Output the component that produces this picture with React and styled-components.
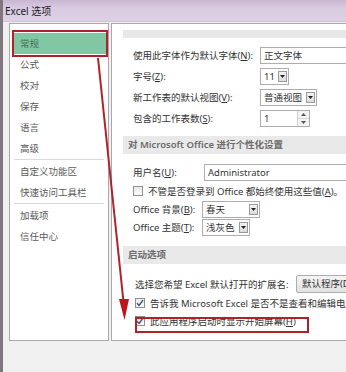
import styled, { createGlobalStyle } from "styled-components";

const GlobalStyle = createGlobalStyle`
  html, body {
    margin: 0;
    padding: 0;
    background: #f0f0f0;
  }
  body {
    font-family: "Noto Sans", "Noto Sans CJK SC", sans-serif;
  }
`;

const navGroups = [
  ["常规", "公式", "校对", "保存", "语言", "高级"],
  ["自定义功能区", "快速访问工具栏"],
  ["加载项", "信任中心"],
];

const Check = ({ checked }) => (
  <CheckBox>
    {checked && (
      <svg width="8" height="8" viewBox="0 0 8 8">
        <path d="M1 4.2 L3.1 6.4 L7 1.2" fill="none" stroke="#34507f" strokeWidth="1.4" />
      </svg>
    )}
  </CheckBox>
);

const Select = ({ value, width }) => (
  <SelectBox $width={width}>
    <SelectText>{value}</SelectText>
    <DropButton>
      <svg width="5" height="3" viewBox="0 0 5 3">
        <path d="M0 0 H5 L2.5 3 Z" fill="#222" />
      </svg>
    </DropButton>
  </SelectBox>
);

const App = () => {
  return (
    <>
      <GlobalStyle />
      <Window>
        <TitleBar>Excel 选项</TitleBar>
        <Body>
          <NavPanel>
            {navGroups.map((group, gi) => (
              <div key={gi}>
                {gi > 0 && <NavSeparator />}
                {group.map(item => (
                  <NavItem key={item} $active={item === "常规"}>
                    {item}
                  </NavItem>
                ))}
              </div>
            ))}
          </NavPanel>

          <ContentPanel>
            <ScrolledBand />

            <Group $top={7}>
              <FieldRow $label={127}>
                <Label>
                  使用此字体作为默认字体(<u>N</u>):
                </Label>
                <TextField>正文字体</TextField>
              </FieldRow>
              <FieldRow $label={127}>
                <Label>
                  字号(<u>Z</u>):
                </Label>
                <Select value="11" width={29} />
              </FieldRow>
              <FieldRow $label={127}>
                <Label>
                  新工作表的默认视图(<u>V</u>):
                </Label>
                <Select value="普通视图" width={57} />
              </FieldRow>
              <FieldRow $label={127}>
                <Label>
                  包含的工作表数(<u>S</u>):
                </Label>
                <SpinBox>
                  <SelectText>1</SelectText>
                  <SpinButtons>
                    <SpinArrow>
                      <svg width="5" height="3" viewBox="0 0 5 3">
                        <path d="M0 3 H5 L2.5 0 Z" fill="#555" />
                      </svg>
                    </SpinArrow>
                    <SpinArrow>
                      <svg width="5" height="3" viewBox="0 0 5 3">
                        <path d="M0 0 H5 L2.5 3 Z" fill="#555" />
                      </svg>
                    </SpinArrow>
                  </SpinButtons>
                </SpinBox>
              </FieldRow>
            </Group>

            <SectionHeader $top={7}>对 Microsoft Office 进行个性化设置</SectionHeader>

            <Group $top={8}>
              <FieldRow $label={71} $height={20}>
                <Label>
                  用户名(<u>U</u>):
                </Label>
                <TextField>Administrator</TextField>
              </FieldRow>
              <CheckRow>
                <Check />
                <span>
                  不管是否登录到 Office 都始终使用这些值(<u>A</u>)。
                </span>
              </CheckRow>
              <FieldRow $label={69} $height={18}>
                <Label>
                  Office 背景(<u>B</u>):
                </Label>
                <Select value="春天" width={58} />
              </FieldRow>
              <FieldRow $label={69} $height={18}>
                <Label>
                  Office 主题(<u>T</u>):
                </Label>
                <Select value="浅灰色" width={48} />
              </FieldRow>
            </Group>

            <SectionHeader $top={10}>启动选项</SectionHeader>

            <Group $top={10} $indent={23}>
              <FieldRow $label={161} $height={20}>
                <Label>选择您希望 Excel 默认打开的扩展名:</Label>
                <PushButton>默认程序(D)...</PushButton>
              </FieldRow>
              <CheckRow>
                <Check checked />
                <span>告诉我 Microsoft Excel 是否不是查看和编辑电子表格的默认程序(T)。</span>
              </CheckRow>
              <CheckRow>
                <Check checked />
                <span>
                  此应用程序启动时显示开始屏幕(<u>H</u>)
                </span>
              </CheckRow>
            </Group>
          </ContentPanel>
        </Body>

        <Annotations width="346" height="372" viewBox="0 0 346 372">
          <rect x="13" y="31" width="94" height="25" fill="none" stroke="#b0222a" strokeWidth="2" />
          <line x1="98" y1="58" x2="123.5" y2="302" stroke="#b0222a" strokeWidth="2" />
          <polygon points="119,299 129,299 124.5,320" fill="#c0141c" />
          <rect x="136" y="318" width="172" height="14" fill="none" stroke="#b0222a" strokeWidth="2" />
        </Annotations>
      </Window>
    </>
  );
};

export default App;

/* ---------------------------- Styled Components --------------------------- */

const Window = styled.div`
  position: relative;
  width: 346px;
  height: 372px;
  overflow: hidden;
  box-sizing: border-box;
  background: #f0f0f0;
  border-left: 3px solid #7f7680;
  font-family: "Noto Sans", "Noto Sans CJK SC", sans-serif;
  font-size: 9.5px;
  color: #333;
`;

const TitleBar = styled.div`
  height: 22px;
  line-height: 22px;
  padding-left: 2px;
  font-size: 10px;
  color: #1e1e1e;
  background: linear-gradient(#c8b6d2, #d9cbe1 40%, #ddd1e4);
  border-bottom: 1px solid #cfc4d4;
  box-sizing: border-box;
`;

const Body = styled.div`
  display: flex;
  gap: 2px;
  height: 319px;
  padding: 1px 0 0 6px;
  box-sizing: border-box;
`;

const NavPanel = styled.div`
  flex: 0 0 100px;
  box-sizing: border-box;
  border: 1px solid #a9a9a9;
  background: #fff;
  padding: 9px 2px 0 4px;
`;

const NavItem = styled.div`
  height: 21px;
  line-height: 21px;
  padding-left: 6px;
  color: ${p => (p.$active ? "#46705a" : "#5a5a5a")};
  background: ${p => (p.$active ? "#82c7a3" : "transparent")};
`;

const NavSeparator = styled.div`
  height: 1px;
  margin: 0 2px 1px 0;
  background: #dadada;
`;

const ContentPanel = styled.div`
  flex: 0 0 300px;
  box-sizing: border-box;
  border: 1px solid #a9a9a9;
  background: #fff;
`;

const ScrolledBand = styled.div`
  height: 8px;
  margin: 6px 0 0 11px;
  background: #e8e8e8;
`;

const Group = styled.div`
  margin-top: ${p => p.$top}px;
  padding-left: ${p => p.$indent || 21}px;
  display: flex;
  flex-direction: column;
`;

const FieldRow = styled.div`
  display: grid;
  grid-template-columns: ${p => p.$label}px 1fr;
  align-items: center;
  height: ${p => p.$height || 20}px;
  margin-bottom: ${p => (p.$height ? 0 : 1)}px;
`;

const Label = styled.span`
  white-space: nowrap;
  color: #333;
`;

const TextField = styled.div`
  height: 17px;
  line-height: 15px;
  box-sizing: border-box;
  border: 1px solid #adadad;
  padding-left: 3px;
  background: #fff;
  white-space: nowrap;
`;

const SelectBox = styled.div`
  display: flex;
  align-items: center;
  width: ${p => p.$width}px;
  height: 17px;
  box-sizing: border-box;
  border: 1px solid #adadad;
  background: #fff;
`;

const SelectText = styled.span`
  flex: 1;
  padding-left: 3px;
  white-space: nowrap;
  overflow: hidden;
`;

const DropButton = styled.div`
  display: flex;
  align-items: center;
  justify-content: center;
  width: 9px;
  height: 11px;
  margin-right: 1px;
  box-sizing: border-box;
  border: 1px solid #9a9a9a;
  background: linear-gradient(#f2f2f2, #dcdcdc);
`;

const SpinBox = styled(SelectBox).attrs({ $width: 50 })``;

const SpinButtons = styled.div`
  display: flex;
  flex-direction: column;
  width: 11px;
  height: 15px;
  border-left: 1px solid #cfcfcf;
`;

const SpinArrow = styled.div`
  flex: 1;
  display: flex;
  align-items: center;
  justify-content: center;
  background: #f3f3f3;
  & + & {
    border-top: 1px solid #d6d6d6;
  }
`;

const SectionHeader = styled.div`
  margin: ${p => p.$top}px 0 0 11px;
  height: 18px;
  line-height: 18px;
  padding-left: 5px;
  background: #e9e9e9;
  color: #6b6b6b;
  font-weight: 600;
  white-space: nowrap;
`;

const CheckRow = styled.div`
  display: flex;
  align-items: center;
  gap: 5px;
  height: 18px;
  white-space: nowrap;
`;

const CheckBox = styled.span`
  display: inline-flex;
  align-items: center;
  justify-content: center;
  flex: 0 0 10px;
  width: 10px;
  height: 10px;
  box-sizing: border-box;
  border: 1px solid #8e8f8f;
  background: linear-gradient(#e9e9e9, #fbfbfb);
`;

const PushButton = styled.div`
  height: 18px;
  line-height: 16px;
  box-sizing: border-box;
  border: 1px solid #acacac;
  border-radius: 2px;
  padding-left: 5px;
  background: linear-gradient(#f4f4f4, #e2e2e2);
  white-space: nowrap;
`;

const Annotations = styled.svg`
  position: absolute;
  top: 0;
  left: -3px;
  pointer-events: none;
`;
